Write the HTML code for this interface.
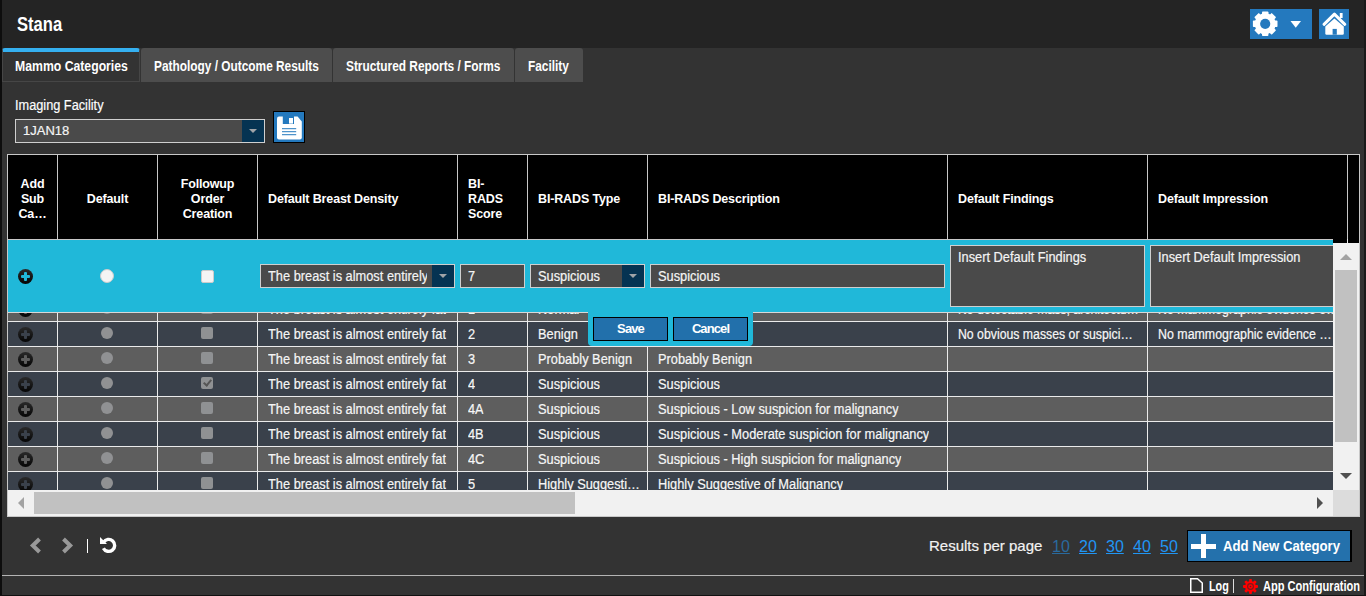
<!DOCTYPE html>
<html><head><meta charset="utf-8">
<style>
*{box-sizing:border-box;margin:0;padding:0}
html,body{width:1366px;height:596px;overflow:hidden;background:#333;font-family:"Liberation Sans",sans-serif;color:#fff}
.a{position:absolute}
#lstripe{left:0;top:0;width:2px;height:596px;background:#0d0d0d}
#rstripe{left:1364px;top:0;width:2px;height:596px;background:#1a1a1a}
#hdr{left:2px;top:0;width:1362px;height:48px;background:#242424}
#title{left:17px;top:13px;font-size:20px;font-weight:bold;transform:scaleX(0.83);transform-origin:0 0}
.btnb{background:#2479be}
.tab{top:48px;height:34px;background:#4d4d4d;border-radius:3px 3px 0 0;font-size:14px;font-weight:bold;line-height:37px;padding-left:13px;white-space:nowrap}
.tt{display:inline-block;transform:scaleX(0.848);transform-origin:0 0}
.tab.act{background:#333;border:1px solid #464646;border-top:4px solid #35b0f0;line-height:29px;padding-left:12px}
#lbl{left:15px;top:97px;font-size:14px;white-space:nowrap;transform:scaleX(0.91);transform-origin:0 0;-webkit-text-stroke:0.2px #f4f4f4}
.sel{background:#4a4a4a;border:1px solid #cfcfcf;font-size:13px;white-space:nowrap;overflow:hidden;-webkit-text-stroke:0.2px #f4f4f4;color:#f4f4f4}
.arr{position:absolute;right:0;top:0;bottom:0;width:22px;background:#053352}
.arr:after{content:"";position:absolute;left:6.5px;top:9px;border-left:4.5px solid transparent;border-right:4.5px solid transparent;border-top:4.5px solid #a0a4a8}
#tbl{left:7px;top:154px;width:1353px;height:363px;border:1px solid #c8c8c8;background:#3b414b;overflow:hidden}
#thead{left:0;top:0;width:1351px;height:85px;background:#000}
.vl{position:absolute;width:1px;background:#ebebeb}
.hl{position:absolute;height:1px;background:#ebebeb}
.th{position:absolute;top:0;height:85px;padding-top:1px;display:flex;align-items:center;font-size:13px;font-weight:bold;letter-spacing:-0.15px;line-height:15px;transform:scaleX(0.962);transform-origin:0 50%}
.th.c{transform-origin:50% 50%}
.row{position:absolute;left:0;width:1351px;height:25px}
.td{position:absolute;top:0;height:24px;line-height:24px;font-size:14px;white-space:nowrap;overflow:hidden;transform:scaleX(0.915);transform-origin:0 0;-webkit-text-stroke:0.2px #fff;color:#f4f4f4}

.plus{position:absolute;width:15px;height:15px;border-radius:50%;background:linear-gradient(#2a2a2a,#050505)}
.plus:before{content:"";position:absolute;left:3px;top:6px;width:9px;height:3px;border-radius:1px;background:#3a414b}
.plus:after{content:"";position:absolute;left:6px;top:3px;width:3px;height:9px;border-radius:1px;background:#3a414b}
.row.g .plus:before,.row.g .plus:after{background:#5e5e5e}
.plus.blk:before,.plus.blk:after{background:#20b8d9}
.rad{position:absolute;width:12px;height:12px;border-radius:50%;background:#909193}
.rad.wht{width:14px;height:14px;background:#f4f4f4;border:1px solid #ccc}
.chk{position:absolute;width:12px;height:12px;background:#8f9193;border-radius:2px}
.chk.on:after{content:"";position:absolute;left:4px;top:1px;width:3px;height:6px;border:solid #555;border-width:0 2.5px 2.5px 0;transform:rotate(40deg)}
.chk.wht{width:13px;height:13px;background:#f4f4f4;border:1px solid #ccc}
.ta{line-height:22px}
.st{display:inline-block;font-size:14px;transform:scaleX(0.915);transform-origin:0 0}
.pbtn{background:#2270ab;border:1px solid #000;font-size:13px;font-weight:bold;text-align:center;line-height:22px;letter-spacing:-0.9px}
.sx{white-space:nowrap;transform-origin:0 0}
.lnk{position:absolute;top:538px;font-size:16px;color:#2196f3;text-decoration:underline}
</style></head><body>
<div class="a" id="lstripe"></div>
<div class="a" id="rstripe"></div>
<div class="a" id="hdr"></div>
<div class="a" id="title">Stana</div>
<div class="a btnb" style="left:1250px;top:9px;width:62px;height:30px">
<svg class="a" style="left:0;top:0" width="62" height="30" viewBox="0 0 62 30"><g fill="#fff" transform="translate(15.2 14.8)"><circle r="10.5"/>
<rect x="-3.2" y="-12.3" width="6.4" height="24.6" rx="0.8"/><rect x="-3.2" y="-12.3" width="6.4" height="24.6" rx="0.8" transform="rotate(45)"/><rect x="-3.2" y="-12.3" width="6.4" height="24.6" rx="0.8" transform="rotate(90)"/><rect x="-3.2" y="-12.3" width="6.4" height="24.6" rx="0.8" transform="rotate(135)"/>
<circle r="5.1" fill="#2479be"/></g><path d="M40.5 12 H51 L45.75 18.7 Z" fill="#fff"/></svg></div>
<div class="a btnb" style="left:1319px;top:9px;width:30px;height:30px">
<svg class="a" style="left:0;top:0" width="30" height="30" viewBox="0 0 30 30"><path d="M5 15.3 L15.4 5.2 L25.8 15.3" fill="none" stroke="#fff" stroke-width="3" stroke-linecap="round" stroke-linejoin="round"/><rect x="20.8" y="4" width="2.8" height="5" fill="#fff"/><path d="M6.3 17.4 L15.4 9.4 L24.8 17.4 V24.5 Q24.8 25.7 23.6 25.7 H7.5 Q6.3 25.7 6.3 24.5 Z" fill="#fff"/><rect x="13.6" y="19.9" width="4.2" height="5.8" fill="#2479be"/></svg></div>

<div class="a tab act" style="left:2px;width:138px"><span class="tt" style="transform:scaleX(0.874)">Mammo Categories</span></div>
<div class="a tab" style="left:141px;width:191px"><span class="tt">Pathology / Outcome Results</span></div>
<div class="a tab" style="left:333px;width:181px"><span class="tt">Structured Reports / Forms</span></div>
<div class="a tab" style="left:515px;width:68px"><span class="tt">Facility</span></div>

<div class="a" id="lbl">Imaging Facility</div>
<div class="a sel" style="left:15px;top:119px;width:250px;height:24px;line-height:22px;padding-left:7px">1JAN18<div class="arr"></div></div>
<div class="a" style="left:273px;top:111px;width:32px;height:32px;background:#000;padding:1px"><div style="width:30px;height:30px;background:#2479be;position:relative">
<svg class="a" style="left:0;top:0" width="30" height="30" viewBox="0 0 30 30"><path d="M5 4.5 H23.6 L27.8 9.4 V25.4 Q27.8 27.4 25.8 27.4 H5 Q3 27.4 3 25.4 V6.5 Q3 4.5 5 4.5 Z" fill="#fff"/><rect x="8.8" y="4" width="11.2" height="8" fill="#2479be"/><rect x="15" y="6" width="4" height="5.6" fill="#fff"/><g fill="#2479be"><rect x="8" y="16.2" width="14.2" height="1"/><rect x="8" y="19.2" width="14.2" height="1"/><rect x="8" y="22.2" width="14.2" height="1"/></g></svg></div></div>

<div class="a" id="tbl">

 <div class="a" id="thead"></div>
 <div class="row g" style="top:142px;background:#5e5e5e">
<i class="plus" style="left:10px;top:5px"></i>
<i class="rad" style="left:93px;top:5px"></i>
<i class="chk" style="left:193px;top:5px"></i>
<span class="td" style="left:260px">The breast is almost entirely fat</span>
<span class="td" style="left:460px">1</span>
<span class="td" style="left:530px">Normal</span>
<span class="td" style="left:650px">Normal</span>
<span class="td" style="left:950px;transform:scaleX(0.877)">No detectable mass, architectu…</span>
<span class="td" style="left:1150px;transform:scaleX(0.886)">No mammographic evidence o…</span>
</div>
<div class="hl" style="left:0;width:1351px;top:166px"></div>
<div class="row" style="top:167px;background:#3a414b">
<i class="plus" style="left:10px;top:5px"></i>
<i class="rad" style="left:93px;top:5px"></i>
<i class="chk" style="left:193px;top:5px"></i>
<span class="td" style="left:260px">The breast is almost entirely fat</span>
<span class="td" style="left:460px">2</span>
<span class="td" style="left:530px">Benign</span>
<span class="td" style="left:650px">Benign</span>
<span class="td" style="left:950px;transform:scaleX(0.877)">No obvious masses or suspici…</span>
<span class="td" style="left:1150px;transform:scaleX(0.886)">No mammographic evidence …</span>
</div>
<div class="hl" style="left:0;width:1351px;top:191px"></div>
<div class="row g" style="top:192px;background:#5e5e5e">
<i class="plus" style="left:10px;top:5px"></i>
<i class="rad" style="left:93px;top:5px"></i>
<i class="chk" style="left:193px;top:5px"></i>
<span class="td" style="left:260px">The breast is almost entirely fat</span>
<span class="td" style="left:460px">3</span>
<span class="td" style="left:530px">Probably Benign</span>
<span class="td" style="left:650px">Probably Benign</span>
</div>
<div class="hl" style="left:0;width:1351px;top:216px"></div>
<div class="row" style="top:217px;background:#3a414b">
<i class="plus" style="left:10px;top:5px"></i>
<i class="rad" style="left:93px;top:5px"></i>
<i class="chk on" style="left:193px;top:5px"></i>
<span class="td" style="left:260px">The breast is almost entirely fat</span>
<span class="td" style="left:460px">4</span>
<span class="td" style="left:530px">Suspicious</span>
<span class="td" style="left:650px">Suspicious</span>
</div>
<div class="hl" style="left:0;width:1351px;top:241px"></div>
<div class="row g" style="top:242px;background:#5e5e5e">
<i class="plus" style="left:10px;top:5px"></i>
<i class="rad" style="left:93px;top:5px"></i>
<i class="chk" style="left:193px;top:5px"></i>
<span class="td" style="left:260px">The breast is almost entirely fat</span>
<span class="td" style="left:460px">4A</span>
<span class="td" style="left:530px">Suspicious</span>
<span class="td" style="left:650px">Suspicious - Low suspicion for malignancy</span>
</div>
<div class="hl" style="left:0;width:1351px;top:266px"></div>
<div class="row" style="top:267px;background:#3a414b">
<i class="plus" style="left:10px;top:5px"></i>
<i class="rad" style="left:93px;top:5px"></i>
<i class="chk" style="left:193px;top:5px"></i>
<span class="td" style="left:260px">The breast is almost entirely fat</span>
<span class="td" style="left:460px">4B</span>
<span class="td" style="left:530px">Suspicious</span>
<span class="td" style="left:650px">Suspicious - Moderate suspicion for malignancy</span>
</div>
<div class="hl" style="left:0;width:1351px;top:291px"></div>
<div class="row g" style="top:292px;background:#5e5e5e">
<i class="plus" style="left:10px;top:5px"></i>
<i class="rad" style="left:93px;top:5px"></i>
<i class="chk" style="left:193px;top:5px"></i>
<span class="td" style="left:260px">The breast is almost entirely fat</span>
<span class="td" style="left:460px">4C</span>
<span class="td" style="left:530px">Suspicious</span>
<span class="td" style="left:650px">Suspicious - High suspicion for malignancy</span>
</div>
<div class="hl" style="left:0;width:1351px;top:316px"></div>
<div class="row" style="top:317px;background:#3a414b">
<i class="plus" style="left:10px;top:5px"></i>
<i class="rad" style="left:93px;top:5px"></i>
<i class="chk" style="left:193px;top:5px"></i>
<span class="td" style="left:260px">The breast is almost entirely fat</span>
<span class="td" style="left:460px">5</span>
<span class="td" style="left:530px">Highly Suggesti…</span>
<span class="td" style="left:650px">Highly Suggestive of Malignancy</span>
</div>
<div class="hl" style="left:0;width:1351px;top:341px"></div>
<div class="vl" style="left:49px;top:0;height:400px"></div>
<div class="vl" style="left:149px;top:0;height:400px"></div>
<div class="vl" style="left:249px;top:0;height:400px"></div>
<div class="vl" style="left:449px;top:0;height:400px"></div>
<div class="vl" style="left:519px;top:0;height:400px"></div>
<div class="vl" style="left:639px;top:0;height:400px"></div>
<div class="vl" style="left:939px;top:0;height:400px"></div>
<div class="vl" style="left:1139px;top:0;height:400px"></div>
<div class="vl" style="left:1339px;top:0;height:400px"></div>
 <div class="a" style="left:0;top:0;width:1351px;height:84px;background:#000"></div><div class="vl" style="left:49px;top:0;height:84px;background:#c8c8c8"></div><div class="vl" style="left:149px;top:0;height:84px;background:#c8c8c8"></div><div class="vl" style="left:249px;top:0;height:84px;background:#c8c8c8"></div><div class="vl" style="left:449px;top:0;height:84px;background:#c8c8c8"></div><div class="vl" style="left:519px;top:0;height:84px;background:#c8c8c8"></div><div class="vl" style="left:639px;top:0;height:84px;background:#c8c8c8"></div><div class="vl" style="left:939px;top:0;height:84px;background:#c8c8c8"></div><div class="vl" style="left:1139px;top:0;height:84px;background:#c8c8c8"></div><div class="vl" style="left:1339px;top:0;height:84px;background:#c8c8c8"></div>
 <div class="hl" style="left:0;width:1325px;top:84px;background:#c8c8c8"></div>
 <div class="th c" style="left:0;width:49px;justify-content:center;text-align:center">Add<br>Sub<br>Ca…</div>
 <div class="th c" style="left:50px;width:99px;justify-content:center">Default</div>
 <div class="th c" style="left:150px;width:99px;justify-content:center;text-align:center">Followup<br>Order<br>Creation</div>
 <div class="th" style="left:260px">Default Breast Density</div>
 <div class="th" style="left:460px">BI-<br>RADS<br>Score</div>
 <div class="th" style="left:530px">BI-RADS Type</div>
 <div class="th" style="left:650px">BI-RADS Description</div>
 <div class="th" style="left:950px">Default Findings</div>
 <div class="th" style="left:1150px">Default Impression</div>
 <div class="a" id="edit" style="left:0;top:85px;width:1325px;height:73px;background:#20b8d9;border-bottom:1px solid #d8d8d8">
   <i class="plus blk" style="left:10px;top:29px"></i>
   <i class="rad wht" style="left:92px;top:29px"></i>
   <i class="chk wht" style="left:193px;top:30px"></i>
   <div class="a sel" style="left:252px;top:24px;width:195px;height:24px;line-height:22px;padding-left:7px"><span style="display:block;width:159px;overflow:hidden"><span class="st">The breast is almost entirely fat</span></span><div class="arr"></div></div>
   <div class="a sel" style="left:452px;top:24px;width:65px;height:24px;line-height:22px;padding-left:7px"><span class="st">7</span></div>
   <div class="a sel" style="left:522px;top:24px;width:115px;height:24px;line-height:22px;padding-left:7px"><span class="st">Suspicious</span><div class="arr"></div></div>
   <div class="a sel" style="left:642px;top:24px;width:295px;height:24px;line-height:22px;padding-left:7px"><span class="st">Suspicious</span></div>
   <div class="a sel ta" style="left:942px;top:5px;width:195px;height:62px;padding-left:7px"><span class="st">Insert Default Findings</span></div>
   <div class="a sel ta" style="left:1142px;top:5px;width:200px;height:62px;padding-left:7px"><span class="st">Insert Default Impression</span></div>
 </div>
 <div class="a" style="left:580px;top:157px;width:165px;height:34px;background:#20b8d9;border-radius:0 0 4px 4px">
   <div class="a pbtn" style="left:5px;top:5px;width:75px;height:24px">Save</div>
   <div class="a pbtn" style="left:85px;top:5px;width:75px;height:24px">Cancel</div>
 </div>
 <div class="a" style="left:1325px;top:85px;width:26px;height:3px;background:#000"><div class="vl" style="left:14px;top:0;height:3px"></div></div>
 <div class="a" id="vsb" style="left:1325px;top:88px;width:26px;height:247px;background:#f1f1f1">
   <div class="a" style="left:2px;top:27px;width:22px;height:172px;background:#c1c1c1"></div>
   <i class="a" style="left:7px;top:11px;border-left:6px solid transparent;border-right:6px solid transparent;border-bottom:6px solid #a3a3a3"></i>
   <i class="a" style="left:7px;top:230px;border-left:6px solid transparent;border-right:6px solid transparent;border-top:6px solid #505050"></i>
 </div>
 <div class="a" id="hsb" style="left:0;top:335px;width:1325px;height:26px;background:#f1f1f1">
   <div class="a" style="left:26px;top:2px;width:541px;height:22px;background:#c1c1c1"></div>
   <i class="a" style="left:10px;top:7px;border-top:6.5px solid transparent;border-bottom:6.5px solid transparent;border-right:6.5px solid #a3a3a3"></i>
   <i class="a" style="left:1309px;top:7px;border-top:6px solid transparent;border-bottom:6px solid transparent;border-left:6px solid #505050"></i>
 </div>
 <div class="a" style="left:1325px;top:335px;width:26px;height:26px;background:#dcdcdc"></div>
</div>


<!-- footer -->
<svg class="a" style="left:29px;top:537px" width="13" height="17" viewBox="0 0 13 17"><path d="M10.5 2 L3.8 8.5 L10.5 15" fill="none" stroke="#999" stroke-width="4"/></svg>
<svg class="a" style="left:61px;top:537px" width="13" height="17" viewBox="0 0 13 17"><path d="M2.5 2 L9.2 8.5 L2.5 15" fill="none" stroke="#999" stroke-width="4"/></svg>
<div class="a" style="left:87px;top:539px;width:1px;height:14px;background:#fff"></div>
<svg class="a" style="left:99px;top:536px" width="18" height="18" viewBox="0 0 18 18"><path d="M4.6 6.2 A6 6 0 1 1 4.4 12.2" fill="none" stroke="#fff" stroke-width="3.4"/><path d="M1 1 L1 8 L8 8 Z" fill="#fff"/></svg>
<div class="a" id="rpp" style="left:929px;top:537px;font-size:15px;white-space:nowrap;color:#f2f2f2;-webkit-text-stroke:0.2px #f2f2f2">Results per page</div>
<div class="a lnk" style="left:1052px;color:#2a6a9e">10</div>
<div class="a lnk" style="left:1079px">20</div>
<div class="a lnk" style="left:1106px">30</div>
<div class="a lnk" style="left:1133px">40</div>
<div class="a lnk" style="left:1160px">50</div>
<div class="a" style="left:1187px;top:530px;width:165px;height:32px;background:#2471ac;border:1px solid #000;border-width:1px 2px 1px 1px"></div>
<div class="a" style="left:1191px;top:544px;width:25px;height:5px;background:#fff"></div>
<div class="a" style="left:1201px;top:534px;width:5px;height:24px;background:#fff"></div>
<div class="a sx" style="left:1223px;top:537px;font-size:15px;font-weight:bold;transform:scaleX(0.877)">Add New Category</div>
<div class="a" style="left:2px;top:575px;width:1362px;height:1px;background:#b4b4b4"></div>
<div class="a" style="left:0;top:595px;width:1366px;height:1px;background:#111"></div>
<svg class="a" style="left:1190px;top:578px" width="14" height="16" viewBox="0 0 14 16"><path d="M0.75 0.75 H7.5 L12.25 5 V14.25 H0.75 Z" fill="none" stroke="#fff" stroke-width="1.5"/></svg>
<div class="a sx" style="left:1209px;top:578px;font-size:14px;font-weight:bold;transform:scaleX(0.77)">Log</div>
<div class="a" style="left:1233px;top:579px;width:1px;height:14px;background:#ddd"></div>
<svg class="a" style="left:1243px;top:579px" width="15" height="15" viewBox="0 0 15 15"><g fill="#f00" transform="translate(7.5 7.5)"><circle r="5.4"/><rect x="-1.4" y="-7.5" width="2.8" height="15" rx="0.8"/><rect x="-1.4" y="-7.5" width="2.8" height="15" rx="0.8" transform="rotate(45)"/><rect x="-1.4" y="-7.5" width="2.8" height="15" rx="0.8" transform="rotate(90)"/><rect x="-1.4" y="-7.5" width="2.8" height="15" rx="0.8" transform="rotate(135)"/><circle r="2.9" fill="none" stroke="#7a1a1a" stroke-width="1.1"/><circle r="0.8" fill="#602020"/></g></svg>
<div class="a sx" style="left:1263px;top:578px;font-size:14px;font-weight:bold;transform:scaleX(0.79)">App Configuration</div>
</body></html>
